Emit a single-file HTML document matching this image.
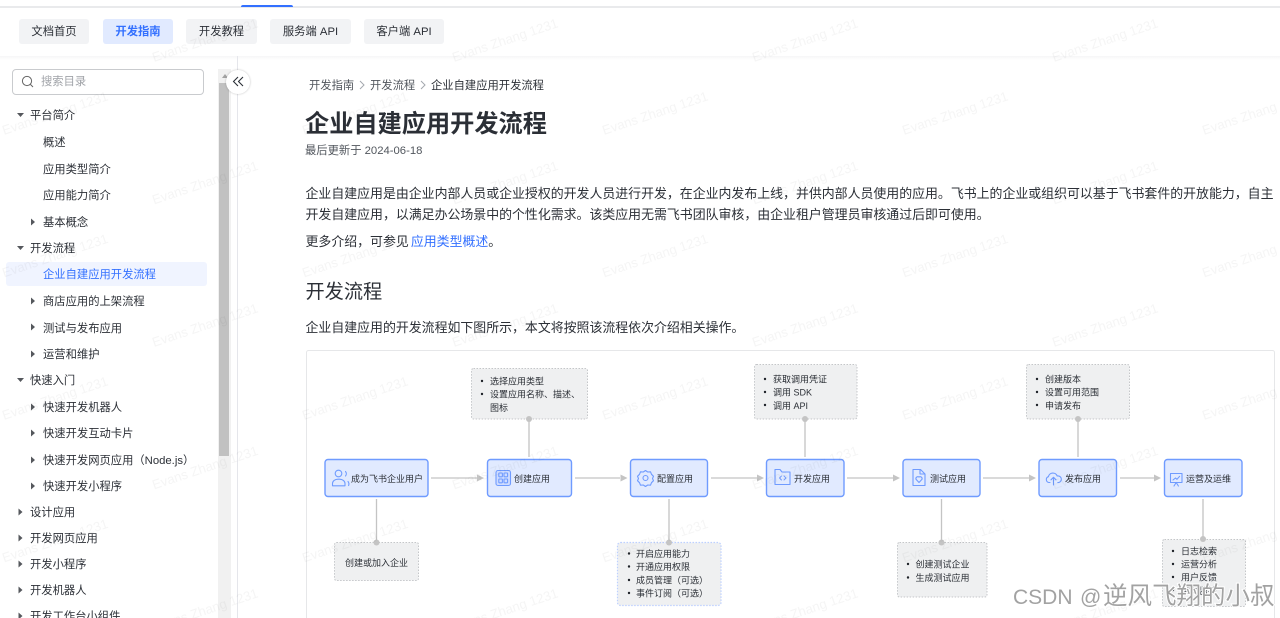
<!DOCTYPE html>
<html lang="zh-CN"><head><meta charset="utf-8"><title>企业自建应用开发流程</title>
<style>
html,body{margin:0;padding:0;width:1280px;height:618px;overflow:hidden;background:#fff}
body{position:relative;font-family:"Liberation Sans","Noto Sans CJK SC",sans-serif;color:#1f2329;font-size:11.3px;filter:blur(.3px)}
.a{position:absolute}
.t{position:absolute;white-space:nowrap;height:20px;line-height:20px;transform:translateY(1px)}
.tab{position:absolute;top:19px;height:25px;line-height:27px;background:#f2f3f5;border-radius:3px;text-align:center;color:#2b2f36;font-size:11.3px}
.tab.on{background:#e1eaff;color:#3370ff;font-weight:700}
.s{color:#2b2f36}
.b{font-size:12.92px;color:#2b2f36}
svg text{font-family:"Liberation Sans","Noto Sans CJK SC",sans-serif}
</style></head><body>
<div class="a" style="left:0;top:6px;width:1280px;height:1.5px;background:#e9eaec"></div>
<div class="a" style="left:241px;top:5px;width:52px;height:2px;background:#3370ff;border-radius:2px 2px 0 0"></div>
<div class="a" style="left:0;top:56px;width:1280px;height:4px;background:linear-gradient(#f6f6f7,#fff)"></div>
<div class="tab" style="left:19px;width:70px">文档首页</div>
<div class="tab on" style="left:103px;width:70px">开发指南</div>
<div class="tab" style="left:186px;width:71px">开发教程</div>
<div class="tab" style="left:270px;width:81px">服务端 API</div>
<div class="tab" style="left:364px;width:80px">客户端 API</div>

<div class="a" style="left:12px;top:69px;width:190px;height:24px;border:1px solid #c9cbce;border-radius:4px"></div>
<svg class="a" style="left:21px;top:75px" width="14" height="14" viewBox="0 0 14 14" fill="none" stroke="#666" stroke-width="1"><circle cx="6" cy="6" r="4.6"/><path d="M9.4 9.4l2.6 2.6"/></svg>
<div class="t" style="left:41px;top:71px;color:#a0a3a8">搜索目录</div>

<div class="a" style="left:218px;top:69px;width:13px;height:549px;background:#f1f1f1"></div>
<div class="a" style="left:219px;top:83px;width:10px;height:373px;background:#c1c1c1"></div>
<div class="a" style="left:222px;top:74px;width:0;height:0;border:3px solid transparent;border-top:0;border-bottom:4px solid #a3a3a3"></div>
<div class="a" style="left:237px;top:56px;width:1px;height:562px;background:#e5e6eb"></div>
<div class="a" style="left:226px;top:70px;width:24px;height:24px;border-radius:50%;background:#fff;box-shadow:0 0 2px rgba(0,0,0,.25)"></div>
<svg class="a" style="left:232px;top:76px" width="13" height="12" viewBox="0 0 13 12" fill="none" stroke="#2b2f36" stroke-width="1.1"><path d="M6 1L1.5 5.5 6 10M11 1L6.5 5.5 11 10"/></svg>

<div class="a" style="left:6px;top:262px;width:201px;height:24px;background:#f0f4ff;border-radius:3px"></div>
<svg class="a" style="left:0;top:100px" width="45" height="518" viewBox="0 100 45 518" fill="#55585d">
<path d="M17 113h7l-3.500 4zM17 246h7l-3.500 4zM17 378h7l-3.500 4z"/>
<path d="M31 218.500v7l4-3.500zM31 297.500v7l4-3.500zM31 323.500v7l4-3.500zM31 350.500v7l4-3.500zM31 403.500v7l4-3.500zM31 429.500v7l4-3.500zM31 456.500v7l4-3.500zM31 482.500v7l4-3.500z"/>
<path d="M18.500 508.500v7l4-3.500zM18.500 534.500v7l4-3.500zM18.500 560.500v7l4-3.500zM18.500 586.500v7l4-3.500zM18.500 612.500v7l4-3.500z"/>
</svg>
<div class="t s" style="left:30px;top:105px">平台简介</div>
<div class="t s" style="left:43px;top:132px">概述</div>
<div class="t s" style="left:43px;top:159px">应用类型简介</div>
<div class="t s" style="left:43px;top:185px">应用能力简介</div>
<div class="t s" style="left:43px;top:212px">基本概念</div>
<div class="t s" style="left:30px;top:238px">开发流程</div>
<div class="t" style="left:43px;top:264px;color:#3370ff">企业自建应用开发流程</div>
<div class="t s" style="left:43px;top:291px">商店应用的上架流程</div>
<div class="t s" style="left:43px;top:317.500px">测试与发布应用</div>
<div class="t s" style="left:43px;top:344px">运营和维护</div>
<div class="t s" style="left:30px;top:370px">快速入门</div>
<div class="t s" style="left:43px;top:397px">快速开发机器人</div>
<div class="t s" style="left:43px;top:423px">快速开发互动卡片</div>
<div class="t s" style="left:43px;top:450px">快速开发网页应用（Node.js）</div>
<div class="t s" style="left:43px;top:476px">快速开发小程序</div>
<div class="t s" style="left:30px;top:502px">设计应用</div>
<div class="t s" style="left:30px;top:528px">开发网页应用</div>
<div class="t s" style="left:30px;top:554px">开发小程序</div>
<div class="t s" style="left:30px;top:580px">开发机器人</div>
<div class="t s" style="left:30px;top:606px">开发工作台小组件</div>

<div class="t" style="left:309px;top:75px;color:#51565d">开发指南</div>
<svg class="a" style="left:358px;top:80px" width="8" height="10" fill="none" stroke="#a4a8ae"><path d="M2 1l4 4-4 4"/></svg>
<div class="t" style="left:370px;top:75px;color:#51565d">开发流程</div>
<svg class="a" style="left:419px;top:80px" width="8" height="10" fill="none" stroke="#a4a8ae"><path d="M2 1l4 4-4 4"/></svg>
<div class="t" style="left:431px;top:75px;color:#2b2f36">企业自建应用开发流程</div>
<div class="t" style="left:305px;top:114px;font-size:24.200px;font-weight:700;color:#2b2f36">企业自建应用开发流程</div>
<div class="t" style="left:305px;top:140px;color:#51565d">最后更新于 2024-06-18</div>
<div class="t b" style="left:305.500px;top:183px">企业自建应用是由企业内部人员或企业授权的开发人员进行开发，在企业内发布上线，并供内部人员使用的应用。飞书上的企业或组织可以基于飞书套件的开放能力，自主</div>
<div class="t b" style="left:305.500px;top:204px">开发自建应用，以满足办公场景中的个性化需求。该类应用无需飞书团队审核，由企业租户管理员审核通过后即可使用。</div>
<div class="t b" style="left:305.500px;top:231px">更多介绍，可参见 <span style="color:#3370ff;margin-left:-1.500px">应用类型概述</span>。</div>
<div class="t" style="left:305.500px;top:282px;font-size:19.200px;color:#2b2f36">开发流程</div>
<div class="t b" style="left:305.500px;top:317px">企业自建应用的开发流程如下图所示，本文将按照该流程依次介绍相关操作。</div>

<svg class="a" style="left:0;top:0" width="1280" height="618" viewBox="0 0 1280 618">
<rect x="306.500" y="350.500" width="968" height="280" rx="2" fill="#fff" stroke="#e6e7e9"/>
<g fill="#eff0f1" stroke="#c4c6c9" stroke-width="1" stroke-dasharray="1.500 1.500">
<rect x="471.500" y="368.500" width="116" height="50.500" rx="2"/>
<rect x="334.500" y="542.500" width="84" height="38" rx="2"/>
<rect x="754.500" y="364.500" width="102.500" height="54.500" rx="2"/>
<rect x="897.500" y="542.500" width="89.500" height="54.500" rx="2"/>
<rect x="1026.500" y="364.500" width="103" height="54.500" rx="2"/>
<rect x="1162.500" y="539.500" width="83" height="67" rx="2"/>
<rect x="617.500" y="542.500" width="103.500" height="63" rx="3" stroke="#bdd0ff" stroke-width="1.200"/>
</g>
<g stroke="#c4c4c4" stroke-width="1.300" fill="none">
<path d="M431 478h48M575 478h45M711 478h46M847 478h46M983 478h46M1120 478h34"/>
<path d="M529 419v38M376.500 499v43M669 499v43M805 419v38M941.500 499v43M1078 419v38M1203 499v40"/>
</g>
<g fill="#c4c4c4">
<path d="M477 474.500l7 3.500-7 3.500zM620.500 474.500l7 3.500-7 3.500zM757 474.500l7 3.500-7 3.500zM893 474.500l7 3.500-7 3.500zM1029 474.500l7 3.500-7 3.500zM1154 474.500l7 3.500-7 3.500z"/>
<circle cx="529" cy="419" r="3"/><circle cx="376.500" cy="542.500" r="3"/><circle cx="669" cy="542.500" r="3"/><circle cx="805" cy="419" r="3"/><circle cx="941.500" cy="542.500" r="3"/><circle cx="1078" cy="419" r="3"/><circle cx="1203" cy="539" r="3"/>
</g>
<g fill="#e1eaff" stroke="#6f9bff" stroke-width="1.400">
<rect x="325" y="459.500" width="103" height="37" rx="3"/>
<rect x="487.500" y="459.500" width="84" height="37" rx="3"/>
<rect x="630.500" y="459.500" width="77" height="37" rx="3"/>
<rect x="766.500" y="459.500" width="77.500" height="37" rx="3"/>
<rect x="903" y="459.500" width="77" height="37" rx="3"/>
<rect x="1039" y="459.500" width="77.500" height="37" rx="3"/>
<rect x="1164.500" y="459.500" width="77.500" height="37" rx="3"/>
</g>
<g fill="none" stroke="#6f9bff" stroke-width="1.100" stroke-linejoin="round" stroke-linecap="round">
<circle cx="338.500" cy="473.500" r="3.300"/><path d="M332.500 485.800v-2.300a5.500 4.300 0 0 1 5.500-4.300h1.500a5.500 4.300 0 0 1 5.500 4.300v2.300zM345.500 471.500a3.500 3.500 0 0 1 0 4.500M348 481.500a4 4 0 0 1 .6 4"/>
<rect x="496" y="470.500" width="14.500" height="15" rx="2" fill="#cfdcff"/><rect x="498.800" y="473" width="3.600" height="3.800" rx=".5"/><rect x="504" y="473" width="3.600" height="3.800" rx=".5"/><rect x="498.800" y="479" width="3.600" height="3.800" rx=".5"/><rect x="504" y="479" width="3.600" height="3.800" rx=".5"/>
<path d="M645.500 470.500l2.200 1.500 2.800-.2 1 2.500 2 2-1 2.200 1 2.200-2 2-1 2.500-2.800-.2-2.200 1.500-2.200-1.500-2.800.2-1-2.500-2-2 1-2.200-1-2.200 2-2 1-2.500 2.800.2z"/><circle cx="645.500" cy="478" r="2.500"/>
<path d="M775 469.500h5l2 2.500h8v12.500h-15z"/><path d="M781.500 476l-2 2 2 2M784 476l2 2-2 2" stroke-width=".9"/>
<path d="M913 469.500h7.500l4.500 4.500v11.500h-12zM920 469.500v4.500h5"/><path d="M919 482.500l-3-3.200a2 2 0 0 1 3-2.300 2 2 0 0 1 3 2.300z"/>
<path d="M1050 482.500h-1.200a3 3 0 0 1-.4-5.800 4.600 4.600 0 0 1 8.800-.7 3.300 3.300 0 0 1 1.600 6.500h-1"/><path d="M1053.500 485v-7.500M1051 479.800l2.500-2.500 2.500 2.500"/>
<path d="M1170.500 473.500h11.500v9h-11.500zM1173 480l2.500-2 1.500 1.300 2.600-3M1174 486l2.200-3.500 2.200 3.500"/>
</g>
<g font-size="9" fill="#2b2f36">
<text x="351" y="482">成为飞书企业用户</text>
<text x="514" y="482">创建应用</text>
<text x="657" y="482">配置应用</text>
<text x="794" y="482">开发应用</text>
<text x="930" y="482">测试应用</text>
<text x="1065" y="482">发布应用</text>
<text x="1186" y="482">运营及运维</text>
<text x="345" y="566">创建或加入企业</text>
<text x="490" y="384.500">选择应用类型</text><text x="490" y="397.700">设置应用名称、描述、</text><text x="490" y="411">图标</text>
<text x="773" y="382.500">获取调用凭证</text><text x="773" y="395.700">调用 SDK</text><text x="773" y="409">调用 API</text>
<text x="636" y="557">开启应用能力</text><text x="636" y="570.200">开通应用权限</text><text x="636" y="583.400">成员管理（可选）</text><text x="636" y="596.600">事件订阅（可选）</text>
<text x="915.500" y="567.500">创建测试企业</text><text x="915.500" y="580.800">生成测试应用</text>
<text x="1045" y="382.500">创建版本</text><text x="1045" y="395.700">设置可用范围</text><text x="1045" y="409">申请发布</text>
<text x="1181" y="554.300">日志检索</text><text x="1181" y="567.500">运营分析</text><text x="1181" y="580.700">用户反馈</text><text x="1181" y="594">实时监控</text>
</g>
<g fill="#1f2329">
<circle cx="482" cy="381" r="1.200"/><circle cx="482" cy="394" r="1.200"/>
<circle cx="765" cy="379" r="1.200"/><circle cx="765" cy="392" r="1.200"/><circle cx="765" cy="405" r="1.200"/>
<circle cx="629" cy="553.500" r="1.200"/><circle cx="629" cy="566.500" r="1.200"/><circle cx="629" cy="580" r="1.200"/><circle cx="629" cy="593" r="1.200"/>
<circle cx="908" cy="564" r="1.200"/><circle cx="908" cy="577.500" r="1.200"/>
<circle cx="1037" cy="379" r="1.200"/><circle cx="1037" cy="392" r="1.200"/><circle cx="1037" cy="405" r="1.200"/>
<circle cx="1173" cy="551" r="1.200"/><circle cx="1173" cy="564" r="1.200"/><circle cx="1173" cy="577" r="1.200"/><circle cx="1173" cy="590" r="1.200"/>
</g>
<defs><pattern id="wm" x="0" y="12" width="300" height="142.500" patternUnits="userSpaceOnUse">
<text transform="translate(154 50) rotate(-18.500)" font-size="13.200" fill="#000" fill-opacity=".04">Evans Zhang 1231</text>
<text transform="translate(4 123) rotate(-18.500)" font-size="13.200" fill="#000" fill-opacity=".04">Evans Zhang 1231</text>
</pattern></defs>
<rect width="1280" height="618" fill="url(#wm)"/>
<g style="paint-order:stroke" stroke="#fff" stroke-width="2" fill="#a2a2a2">
<text x="1013" y="604" font-size="21">CSDN</text>
<text x="1080" y="604" font-size="21">@</text>
<text x="1103" y="604" font-size="24.500">逆风飞翔的小叔</text>
</g>
</svg>
</body></html>
